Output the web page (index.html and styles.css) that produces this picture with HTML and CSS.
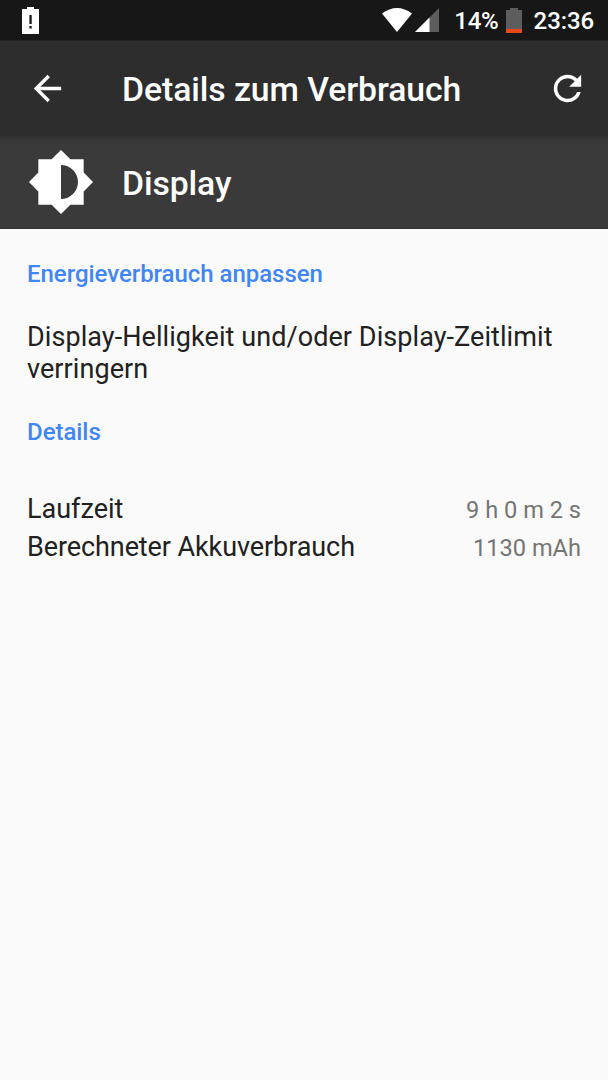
FILE: index.html
```html
<!doctype html>
<html lang="de">
<head>
    <meta charset="utf-8">
    <title>Details zum Verbrauch</title>
    <link rel="stylesheet" href="styles.css">
</head>

<body>
<div class="statusbar">
    <svg class="alert" width="17" height="27" viewBox="0 0 17 27"><path fill="#fff" d="M5 0h7v2h5v25H0V2h5z"/><path fill="#171717" d="M7.4 8h2.3v9H7.4zM7.4 19h2.3v2.4H7.4z"/></svg>
    <div class="status-right">
        <svg class="wifi" width="30" height="24" viewBox="0 0 30 24"><path fill="#fff" d="M0 5.5Q15-5.5 30 5.5L15 24z"/></svg>
        <svg class="signal" width="24" height="24" viewBox="0 0 24 24"><path fill="#5d5d5d" d="M24 0v24H0z"/><path fill="#fff" d="M14.5 9.5V24H0z"/></svg>
        <span class="percent">14%</span>
        <svg class="battery" width="16" height="25" viewBox="0 0 16 25"><path fill="#5d5d5d" d="M4 0h8v2h4v19H0V2h4z"/><path fill="#e64a19" d="M0 21h16v4H0z"/></svg>
        <span class="clock">23:36</span>
    </div>
</div>
<div class="toolbar">
    <svg class="back" width="41" height="41" viewBox="0 0 24 24"><path fill="#fff" d="M20 11H7.83l5.59-5.59L12 4l-8 8 8 8 1.41-1.41L7.83 13H20v-2z"/></svg>
    <h1>Details zum Verbrauch</h1>
    <svg class="refresh" width="41" height="41" viewBox="0 0 24 24"><path fill="#fff" d="M17.65 6.35A7.96 7.96 0 0 0 12 4a8 8 0 1 0 7.73 10h-2.08A6 6 0 1 1 12 6c1.66 0 3.14.69 4.22 1.78L13 11h7V4z"/></svg>
</div>
<div class="header">
    <svg class="brightness" width="68" height="68" viewBox="0 0 24 24"><path fill="#fff" d="M20 15.31L23.31 12 20 8.69V4h-4.69L12 .69 8.69 4H4v4.69L.69 12 4 15.31V20h4.69L12 23.31 15.31 20H20v-4.69zM12 18V6c3.31 0 6 2.69 6 6s-2.69 6-6 6z"/></svg>
    <h2>Display</h2>
</div>
<div class="content">
    <h3>Energieverbrauch anpassen</h3>
    <p class="tip">Display-Helligkeit und/oder Display-Zeitlimit verringern</p>
    <h3>Details</h3>
    <div class="details">
        <div class="row"><span>Laufzeit</span><span class="value">9 h 0 m 2 s</span></div>
        <div class="row"><span class="label-long">Berechneter Akkuverbrauch</span><span class="value">1130 mAh</span></div>
    </div>
</div>
</body>

</html>
```
FILE: styles.css
```css
body {margin: 0; height: 1080px; overflow: hidden; background: #fafafa; color: #212121; font-family: Roboto, 'Liberation Sans', sans-serif;}
svg {display: block; flex: none;}
h1, h2, h3, p {margin: 0; font-weight: 500;}
.statusbar {box-sizing: border-box; height: 40px; padding: 0 14px 0 22px; display: flex; align-items: center; justify-content: space-between; background: #171717; color: #fff; font-size: 24px; line-height: 40px; font-weight: 500;}
.status-right {display: flex; align-items: center;}
.status-right span {padding-top: 2px;}
.signal {margin-left: 3px;}
.percent {margin-left: 15px; letter-spacing: -0.2px;}
.battery {margin-left: 7px;}
.clock {margin-left: 12px; letter-spacing: -0.1px;}
.toolbar {box-sizing: border-box; height: 96px; padding: 0 20px 0 27px; display: flex; align-items: center; background: #2d2d2d; color: #fff; border-top: 1px solid #232323;}
.toolbar svg {margin-bottom: 1px;}
.toolbar h1 {flex: 1; margin: 3px 0 0 54px; font-size: 33.75px; line-height: 40px; letter-spacing: -0.07px;}
.header {box-sizing: border-box; height: 93px; padding-left: 27px; display: flex; align-items: center; background: linear-gradient(#303030, #3a3a3a 6px); color: #fff; border-bottom: 1px solid #303030;}
.header h2 {margin: 4px 0 0 27px; font-size: 33.75px; line-height: 40px; letter-spacing: -0.1px;}
.content {padding: 29px 27px 0;}
.content h3 {font-size: 24px; line-height: 32px; color: #4285f4; letter-spacing: -0.04px;}
.content .tip {margin: 31px 0; font-size: 27px; font-weight: 400; line-height: 32px; letter-spacing: 0.07px;}
.details {margin-top: 42px;}
.row {display: flex; justify-content: space-between; align-items: baseline; height: 38px; font-size: 27px; line-height: 38px;}
.label-long {letter-spacing: -0.09px;}
.value {font-size: 23.6px; line-height: 36px; color: #757575;}
```
